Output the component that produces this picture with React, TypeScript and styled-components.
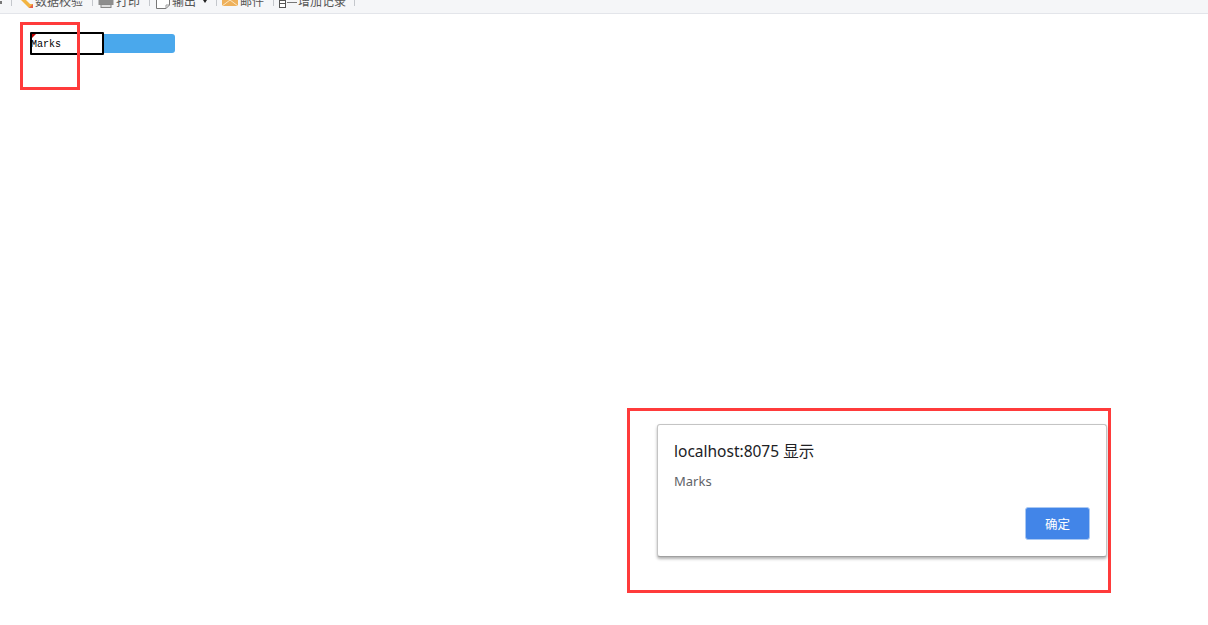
import styled, {createGlobalStyle} from "styled-components";

const GlobalStyle = createGlobalStyle`
    html, body {
        margin: 0;
        padding: 0;
        background: #fff;
        font-family: "Noto Sans", "Noto Sans CJK SC", sans-serif;
    }
`;

const Page = styled.div`
    position: relative;
    width: 1208px;
    height: 625px;
    overflow: hidden;
    background: #fff;
`;

const Toolbar = styled.div`
    display: flex;
    align-items: flex-end;
    height: 13px;
    overflow: hidden;
    background: #f5f6f8;
    border-bottom: 1px solid #e3e5ea;
`;

// 上一个按钮露出来的一点
const CutStub = styled.div`
    flex: 0 0 2px;
    height: 3px;
    margin: 1px 9px 0 0;
    align-self: flex-start;
    background: #777;
`;

const Separator = styled.div`
    flex: 0 0 1px;
    height: 6px;
    align-self: flex-start;
    background: #c4c7cc;
`;

// 图标和文字都比工具栏高，顶部被裁掉
const ToolItem = styled.div<{ $width: number; $pad: number; $gap: number }>`
    display: flex;
    align-items: center;
    gap: ${(p) => p.$gap}px;
    flex: 0 0 ${(p) => p.$width}px;
    height: 24px;
    padding-left: ${(p) => p.$pad}px;
    box-sizing: border-box;
    font: 12px/16px "Noto Sans CJK SC", sans-serif;
    color: #555;
    white-space: nowrap;
`;

const Caret = styled.span`
    margin-left: 6px;
    border-top: 3px solid #222;
    border-left: 2.500px solid transparent;
    border-right: 2.500px solid transparent;
`;

const Sheet = styled.div`
    display: flex;
    align-items: center;
    padding: 18px 0 0 30px;
`;

const Cell = styled.div`
    position: relative;
    width: 74px;
    height: 23px;
    box-sizing: border-box;
    border: 2px solid #000;
    border-radius: 1px;
    font: 10px/21px "Liberation Mono", "DejaVu Sans Mono", monospace;
    text-indent: -1px;
    color: #000;

    &::before {
        content: "";
        position: absolute;
        top: 0;
        left: 0;
        border-top: 4px solid #c00000;
        border-right: 4px solid transparent;
    }
`;

const BlueBar = styled.div`
    width: 71px;
    height: 19px;
    background: #4aa8ec;
    border-radius: 0 3px 3px 0;
`;

const RedFrame = styled.div<{ $x: number; $y: number; $w: number; $h: number }>`
    position: absolute;
    left: ${(p) => p.$x}px;
    top: ${(p) => p.$y}px;
    width: ${(p) => p.$w}px;
    height: ${(p) => p.$h}px;
    box-sizing: border-box;
    border: 3px solid #ff3b3b;
`;

const Dialog = styled.div`
    position: absolute;
    left: 657px;
    top: 424px;
    width: 450px;
    height: 133px;
    box-sizing: border-box;
    padding: 15px 16px 15px 16px;
    display: flex;
    flex-direction: column;
    background: #fff;
    border: 1px solid #c4c4c4;
    border-bottom-color: #a0a0a0;
    border-radius: 3px;
    box-shadow: 0 2px 3px rgba(0, 0, 0, 0.3);
`;

const DialogTitle = styled.div`
    font: 15.5px/22px "Noto Sans", "Noto Sans CJK SC", sans-serif;
    color: #202124;
`;

const DialogText = styled.div`
    margin-top: 9px;
    font: 13px/20px "Noto Sans", "Noto Sans CJK SC", sans-serif;
    color: #5f6368;
`;

const DialogFooter = styled.div`
    display: flex;
    justify-content: flex-end;
    margin-top: 16px;
`;

const OkButton = styled.button`
    width: 65px;
    height: 33px;
    padding: 0;
    border: 1px solid #a9c8f3;
    border-radius: 3px;
    background: #4285e8;
    color: #fff;
    font: 12.5px "Noto Sans CJK SC", sans-serif;
`;

const PencilIcon = () => (
    <svg width="14" height="18" viewBox="0 1 14 18">
        <path d="M1 4 L10 13 L13 13 L13 17 L9 17 L0 8 Z" fill="#f2b441"/>
        <path d="M9 17 L13 17 L13 13 Z" fill="#e8604c"/>
    </svg>
);

const PrinterIcon = () => (
    <svg width="16" height="18" viewBox="0 1 16 18">
        <rect x="0.5" y="7" width="15" height="7" fill="#8d8d8d"/>
        <rect x="3" y="13.500" width="10" height="3" fill="#ddd" stroke="#888"/>
    </svg>
);

const ExportIcon = () => (
    <svg width="16" height="18" viewBox="0 1 16 18">
        <path d="M1.500 8 V17.500 H11 L14.500 14 V8" fill="#fff" stroke="#777"/>
        <path d="M11 17.500 V14 H14.500" fill="none" stroke="#999"/>
    </svg>
);

const MailIcon = () => (
    <svg width="16" height="18" viewBox="0 1 16 18">
        <rect x="0" y="8" width="16" height="7" fill="#eeb05a"/>
        <path d="M0 15 L8 9 L16 15" fill="#eeb05a" stroke="#fbe6c2"/>
    </svg>
);

const AddRowIcon = () => (
    <svg width="19" height="18" viewBox="0 1 19 18">
        <rect x="1.500" y="9.500" width="6" height="7" fill="#fff" stroke="#555"/>
        <path d="M1.500 12.500 H7.500" stroke="#555"/>
        <path d="M9 11.500 H19" stroke="#777"/>
    </svg>
);

const App = () => {
    return (
        <Page>
            <GlobalStyle/>
            <Toolbar>
                <CutStub/>
                <Separator/>
                <ToolItem $width={80} $pad={8} $gap={1}><PencilIcon/>数据校验</ToolItem>
                <Separator/>
                <ToolItem $width={56} $pad={5} $gap={2}><PrinterIcon/>打印</ToolItem>
                <Separator/>
                <ToolItem $width={66} $pad={5} $gap={1}><ExportIcon/>输出<Caret/></ToolItem>
                <Separator/>
                <ToolItem $width={56} $pad={5} $gap={2}><MailIcon/>邮件</ToolItem>
                <Separator/>
                <ToolItem $width={80} $pad={4} $gap={1}><AddRowIcon/>增加记录</ToolItem>
                <Separator/>
            </Toolbar>
            <Sheet>
                <Cell>Marks</Cell>
                <BlueBar/>
            </Sheet>
            <RedFrame $x={20} $y={22} $w={60} $h={68}/>
            <RedFrame $x={627} $y={408} $w={484} $h={185}/>
            <Dialog>
                <DialogTitle>localhost:8075 显示</DialogTitle>
                <DialogText>Marks</DialogText>
                <DialogFooter>
                    <OkButton>确定</OkButton>
                </DialogFooter>
            </Dialog>
        </Page>
    );
}

export default App;
